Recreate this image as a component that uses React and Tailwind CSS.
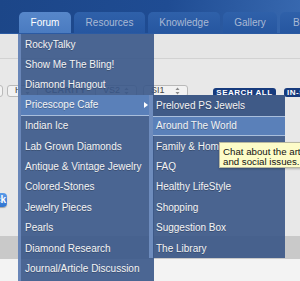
import React from 'react';

const TABS = [
  { label: 'Forum', w: 'w-[52px]', active: true },
  { label: 'Resources', w: 'w-[71px]' },
  { label: 'Knowledge', w: 'w-[72px]' },
  { label: 'Gallery', w: 'w-[54px]' },
  { label: 'Blog', w: 'w-[46px]' },
];

const MAIN = [
  'RockyTalky',
  'Show Me The Bling!',
  'Diamond Hangout',
  'Pricescope Cafe',
  'Indian Ice',
  'Lab Grown Diamonds',
  'Antique & Vintage Jewelry',
  'Colored-Stones',
  'Jewelry Pieces',
  'Pearls',
  'Diamond Research',
  'Journal/Article Discussion',
];

const SUB = [
  'Preloved PS Jewels',
  'Around The World',
  'Family & Home',
  'FAQ',
  'Healthy LifeStyle',
  'Shopping',
  'Suggestion Box',
  'The Library',
];

function Arrows() {
  return (
    <svg width="5" height="8" viewBox="0 0 5 8" className="shrink-0">
      <path d="M2.5 0.5 L4.5 3 L0.5 3 Z" fill="#8a8a8a" />
      <path d="M2.5 7.5 L4.5 5 L0.5 5 Z" fill="#8a8a8a" />
    </svg>
  );
}

function SelectBox({ w, text }) {
  return (
    <div className={`${w} h-[12px] shrink-0 flex items-center justify-between px-[7px] rounded-[3px] border border-[#b9b9b9] bg-[#f2f2f2] text-[9px] text-[#444]`}>
      <span>{text}</span>
      <Arrows />
    </div>
  );
}

export default function App() {
  return (
    <div className="relative w-[300px] h-[281px] overflow-hidden bg-[#f2f2f2] font-['Liberation_Sans',Arial,sans-serif] flex flex-col">
      {/* header with tabs */}
      <div className="h-[34px] shrink-0 flex items-end pl-[19px] gap-[3px] overflow-hidden bg-[linear-gradient(100deg,#1c4688_0%,#1f4c93_55%,#3869b0_100%)] border-b border-[#2b5aa2]">
        {TABS.map(t => (
          <div key={t.label}
            className={`${t.w} h-[21px] shrink-0 flex items-center justify-center rounded-t-[5px] text-[10px] ${t.active
              ? 'bg-[linear-gradient(#5787ca,#4a7bc0)] text-white'
              : 'bg-[linear-gradient(#2f61aa,#2656a0)] text-[#a9b9d4]'}`}>
            {t.label}
          </div>
        ))}
      </div>

      {/* light band */}
      <div className="h-[25px] shrink-0 bg-[#e6e6e6] border-b border-[#d2d2d2]" />

      {/* search area */}
      <div className="h-[177px] shrink-0 bg-[#e8e8e8] pt-[26px] flex flex-col">
        <div className="flex items-end h-[12px]">
          <div className="w-[24px] ml-[-21px] h-[12px] shrink-0 rounded-[3px] border border-[#b9b9b9] bg-[#f2f2f2]" />
          <div className="ml-[4px]"><SelectBox w="w-[31px]" text="H" /></div>
          <div className="w-[50px] ml-[7px] shrink-0 self-center text-[9px] font-bold text-[#555] tracking-[0.3px]">CLARITY</div>
          <SelectBox w="w-[42px]" text="VS2" />
          <div className="ml-[6px]"><SelectBox w="w-[45px]" text="SI1" /></div>
          <div className="ml-[25px] w-[63px] h-[9px] shrink-0 rounded-[3px] bg-[#173b7d] text-white text-[8px] leading-[9px] font-bold tracking-[0.5px] text-center">SEARCH ALL</div>
          <div className="ml-[8px] w-[50px] h-[9px] shrink-0 rounded-[3px] bg-[#173b7d] text-white text-[8px] leading-[9px] font-bold tracking-[0.5px] pl-[3px] whitespace-nowrap overflow-hidden">IN-STOCK</div>
        </div>
        <div className="mt-[96px] ml-[-34px] w-[41px] h-[14px] rounded-[4px] bg-[linear-gradient(#5a9be8,#2f74d0)] text-white text-[10px] leading-[14px] font-bold text-right pr-[1px] shadow-[0_1px_1px_rgba(0,0,0,0.3)]">
          Back
        </div>
      </div>

      {/* darker band */}
      <div className="h-[23px] shrink-0 bg-[#c9c9c9]" />
      <div className="flex-1 bg-[#f3f3f3]" />

      {/* forum dropdown */}
      <div className="absolute left-[18px] top-[34px] w-[136px] h-[260px] bg-[rgba(57,86,136,0.9)] border-l-[3px] border-[rgba(110,140,190,0.85)] text-[10px] text-[#f4f4f4] [text-shadow:0_1px_0_rgba(0,0,0,0.25)]">
        {MAIN.map(m => (
          <div key={m}
            className={`h-[20.4px] flex items-center pl-[4px] relative ${m === 'Pricescope Cafe'
              ? 'bg-[#5a80b9] border-b border-[#a9bedc]'
              : ''}`}>
            {m}
            {m === 'Pricescope Cafe' && (
              <svg width="4" height="6" viewBox="0 0 4 6" className="absolute left-[123px] top-[7px]">
                <path d="M0 0 L4 3 L0 6 Z" fill="#fff" />
              </svg>
            )}
          </div>
        ))}
      </div>

      {/* submenu */}
      <div className="absolute left-[149px] top-[95.2px] w-[136px] bg-[rgba(60,88,136,0.92)] border-l-[4px] border-[rgba(115,145,195,0.9)] text-[10px] text-[#f4f4f4] [text-shadow:0_1px_0_rgba(0,0,0,0.25)]">
        {SUB.map(s => (
          <div key={s}
            className={`h-[20.4px] flex items-center pl-[3px] ${s === 'Preloved PS Jewels'
              ? 'bg-[#3f5a87]'
              : s === 'Around The World'
                ? 'bg-[#5a80b9] border-y border-[#a9bedc]'
                : ''}`}>
            {s}
          </div>
        ))}
      </div>

      {/* tooltip */}
      <div className="absolute left-[219px] top-[142px] w-[100px] h-[26px] bg-[#fdfcc8] border border-[#b8b8a0] pl-[3px] pt-[4px] text-[9.7px] leading-[10px] text-[#111] whitespace-nowrap shadow-[0_1px_2px_rgba(0,0,0,0.25)]">
        <div>Chat about the arts</div>
        <div>and social issues.</div>
      </div>
    </div>
  );
}
